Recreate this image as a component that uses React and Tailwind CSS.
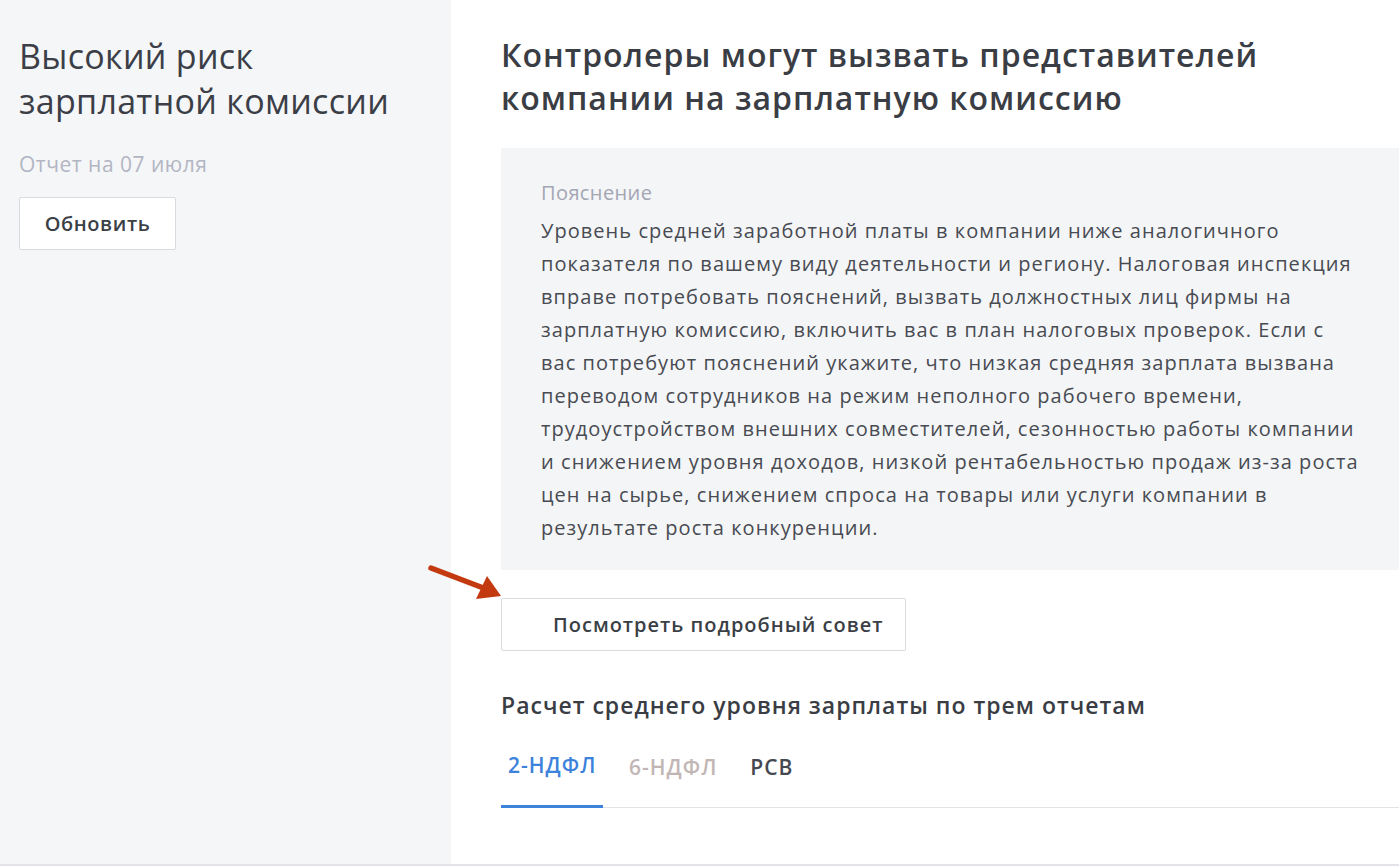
import React from "react";

export default function App() {
  const lines = [
    "Уровень средней заработной платы в компании ниже аналогичного",
    "показателя по вашему виду деятельности и региону. Налоговая инспекция",
    "вправе потребовать пояснений, вызвать должностных лиц фирмы на",
    "зарплатную комиссию, включить вас в план налоговых проверок. Если с",
    "вас потребуют пояснений укажите, что низкая средняя зарплата вызвана",
    "переводом сотрудников на режим неполного рабочего времени,",
    "трудоустройством внешних совместителей, сезонностью работы компании",
    "и снижением уровня доходов, низкой рентабельностью продаж из-за роста",
    "цен на сырье, снижением спроса на товары или услуги компании в",
    "результате роста конкуренции.",
  ];
  return (
    <div className="relative w-[1399px] h-[866px] overflow-hidden flex border-b-2 border-[#e3e4e7] font-['Open_Sans',sans-serif]">
      <aside className="w-[451px] shrink-0 bg-[#f5f6f8] pl-[19px] pt-[34px]">
        <h1 className="text-[34px] leading-[45px] tracking-[0.3px] text-[#3b3e46] font-normal">
          Высокий риск
          <br />
          зарплатной комиссии
        </h1>
        <div className="mt-[27px] text-[21px] leading-[26px] tracking-[0.5px] text-[#b2b5c2]">Отчет на 07 июля</div>
        <button className="mt-[20px] w-[157px] h-[53px] bg-white border border-[#d9dbe0] rounded-[2px] text-[20px] tracking-[0.6px] font-semibold text-[#3b3f46]">
          Обновить
        </button>
      </aside>
      <main className="flex-1 bg-white pl-[50px] pt-[33px]">
        <h2 className="text-[32px] leading-[43px] tracking-[1px] font-semibold text-[#3a3d44]">
          Контролеры могут вызвать представителей
          <br />
          компании на зарплатную комиссию
        </h2>
        <section className="mt-[29px] h-[422px] bg-[#f4f5f7] pl-[40px] pt-[30px]">
          <div className="text-[20px] leading-[30px] tracking-[0.4px] text-[#a3a6b3]">Пояснение</div>
          <p className="mt-[6px] text-[20px] leading-[33px] tracking-[1.05px] text-[#484b52]">
            {lines.map((l, i) => (
              <React.Fragment key={i}>
                {l}
                {i < lines.length - 1 && <br />}
              </React.Fragment>
            ))}
          </p>
        </section>
        <button className="mt-[28px] w-[405px] h-[53px] bg-white border border-[#d9dbe0] rounded-[2px] pl-[51px] text-left text-[20px] tracking-[1px] font-semibold text-[#3b3f46]">
          Посмотреть подробный совет
        </button>
        <h3 className="mt-[40px] text-[23px] leading-[28px] tracking-[1px] font-semibold text-[#3a3d44]">
          Расчет среднего уровня зарплаты по трем отчетам
        </h3>
        <div className="mt-[33px] flex items-end border-b border-[#e2e3e6]">
          <div className="w-[102px] pl-[7px] pb-[27px] border-b-[3px] border-[#3d82db] -mb-px text-[21px] leading-[26px] tracking-[1px] font-semibold text-[#3d82db]">
            2-НДФЛ
          </div>
          <div className="ml-[26px] pb-[27px] text-[21px] leading-[26px] tracking-[1px] font-semibold text-[#c2b6b5]">6-НДФЛ</div>
          <div className="ml-[33px] pb-[27px] text-[21px] leading-[26px] tracking-[1px] font-semibold text-[#454851]">РСВ</div>
        </div>
      </main>
      <svg className="absolute left-[426px] top-[560px]" width="80" height="44" viewBox="0 0 80 44">
        <line x1="5" y1="8" x2="60" y2="29" stroke="#c43a10" strokeWidth="5.5" strokeLinecap="round" />
        <polygon points="75,36 50,39 61,16" fill="#c43a10" />
      </svg>
    </div>
  );
}
